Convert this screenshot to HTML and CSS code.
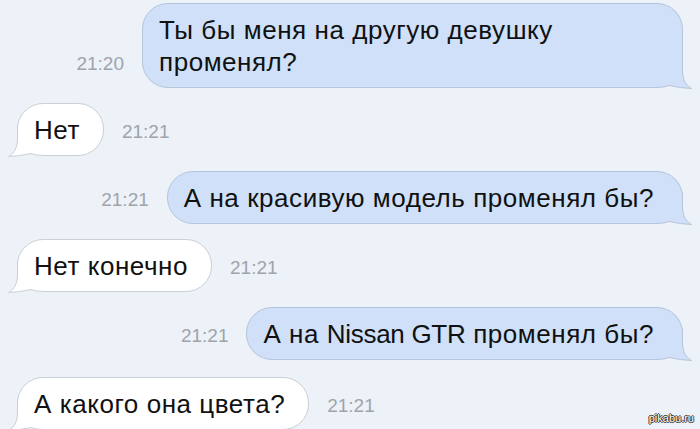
FILE: index.html
```html
<!DOCTYPE html>
<html lang="ru">
<head>
    <meta charset="UTF-8">
    <meta name="viewport" content="width=device-width, initial-scale=1.0">
    <title>Переписка</title>
    <link rel="stylesheet" href="styles.css">
</head>
<body>
    <main class="chat">
        <div class="row out">
            <span class="time">21:20</span>
            <div class="bubble">
                <svg class="tail" width="36" height="32" viewBox="0 0 36 32">
                    <path class="tail-bg" d="M35.5 31.5 Q24 31 13 28.5 Q8 30.5 0 30.5 L0 32 L36 32 Z"/>
                    <path class="tail-fill" d="M26.5 0 L26.5 14 Q26.5 27 35.5 31.5 Q24 31 13 28.5 Q8 30.5 0 30.5 Z"/>
                    <path class="tail-line" d="M26.5 0 L26.5 14 Q26.5 27 35.5 31.5 Q24 31 13 28.5 Q8 30.5 0 30.5"/>
                </svg>
                <span class="text">Ты бы меня на другую девушку променял?</span>
            </div>
        </div>

        <div class="row in">
            <div class="bubble">
                <svg class="tail" width="36" height="32" viewBox="0 0 36 32">
                    <path class="tail-bg" d="M35.5 31.5 Q24 31 13 28.5 Q8 30.5 0 30.5 L0 32 L36 32 Z"/>
                    <path class="tail-fill" d="M26.5 0 L26.5 14 Q26.5 27 35.5 31.5 Q24 31 13 28.5 Q8 30.5 0 30.5 Z"/>
                    <path class="tail-line" d="M26.5 0 L26.5 14 Q26.5 27 35.5 31.5 Q24 31 13 28.5 Q8 30.5 0 30.5"/>
                </svg>
                <span class="text">Нет</span>
            </div>
            <span class="time">21:21</span>
        </div>

        <div class="row out">
            <span class="time">21:21</span>
            <div class="bubble">
                <svg class="tail" width="36" height="32" viewBox="0 0 36 32">
                    <path class="tail-bg" d="M35.5 31.5 Q24 31 13 28.5 Q8 30.5 0 30.5 L0 32 L36 32 Z"/>
                    <path class="tail-fill" d="M26.5 0 L26.5 14 Q26.5 27 35.5 31.5 Q24 31 13 28.5 Q8 30.5 0 30.5 Z"/>
                    <path class="tail-line" d="M26.5 0 L26.5 14 Q26.5 27 35.5 31.5 Q24 31 13 28.5 Q8 30.5 0 30.5"/>
                </svg>
                <span class="text">А на красивую модель променял бы?</span>
            </div>
        </div>

        <div class="row in">
            <div class="bubble">
                <svg class="tail" width="36" height="32" viewBox="0 0 36 32">
                    <path class="tail-bg" d="M35.5 31.5 Q24 31 13 28.5 Q8 30.5 0 30.5 L0 32 L36 32 Z"/>
                    <path class="tail-fill" d="M26.5 0 L26.5 14 Q26.5 27 35.5 31.5 Q24 31 13 28.5 Q8 30.5 0 30.5 Z"/>
                    <path class="tail-line" d="M26.5 0 L26.5 14 Q26.5 27 35.5 31.5 Q24 31 13 28.5 Q8 30.5 0 30.5"/>
                </svg>
                <span class="text">Нет конечно</span>
            </div>
            <span class="time">21:21</span>
        </div>

        <div class="row out">
            <span class="time">21:21</span>
            <div class="bubble">
                <svg class="tail" width="36" height="32" viewBox="0 0 36 32">
                    <path class="tail-bg" d="M35.5 31.5 Q24 31 13 28.5 Q8 30.5 0 30.5 L0 32 L36 32 Z"/>
                    <path class="tail-fill" d="M26.5 0 L26.5 14 Q26.5 27 35.5 31.5 Q24 31 13 28.5 Q8 30.5 0 30.5 Z"/>
                    <path class="tail-line" d="M26.5 0 L26.5 14 Q26.5 27 35.5 31.5 Q24 31 13 28.5 Q8 30.5 0 30.5"/>
                </svg>
                <span class="text">А на <span class="latin">Nissan GTR</span> променял бы?</span>
            </div>
        </div>

        <div class="row in">
            <div class="bubble">
                <svg class="tail" width="36" height="32" viewBox="0 0 36 32">
                    <path class="tail-bg" d="M35.5 31.5 Q24 31 13 28.5 Q8 30.5 0 30.5 L0 32 L36 32 Z"/>
                    <path class="tail-fill" d="M26.5 0 L26.5 14 Q26.5 27 35.5 31.5 Q24 31 13 28.5 Q8 30.5 0 30.5 Z"/>
                    <path class="tail-line" d="M26.5 0 L26.5 14 Q26.5 27 35.5 31.5 Q24 31 13 28.5 Q8 30.5 0 30.5"/>
                </svg>
                <span class="text">А какого она цвета?</span>
            </div>
            <span class="time">21:21</span>
        </div>

        <span class="watermark">pikabu.ru</span>
    </main>
</body>
</html>
```

FILE: styles.css
```css
body {
    margin: 0;
    padding: 0;
    background: #edf1f8;
    font-family: "Liberation Sans", Arial, sans-serif;
    color: #111;
    overflow: hidden;
}

.chat {
    position: relative;
    height: 100vh;
    box-sizing: border-box;
    display: flex;
    flex-direction: column;
    gap: 15px;
    padding: 3px 17px 0;
}

.row {
    display: flex;
    align-items: flex-end;
    gap: 18px;
}

.row.out {
    justify-content: flex-end;
}

.row:last-of-type {
    margin-top: 2px;
}

.time {
    font-size: 19px;
    line-height: 32px;
    padding-bottom: 8px;
    color: #9fa4ab;
}

.bubble {
    position: relative;
    box-sizing: border-box;
    max-width: 541px;
    padding: 10px 28px 9px 16px;
    border: 1px solid;
    border-radius: 26px;
    font-size: 26px;
    line-height: 32px;
    letter-spacing: 0.55px;
}

.bubble .text {
    position: relative;
}

/* latin words run a bit narrower in the original font */
.latin {
    letter-spacing: -0.3px;
}

.out .bubble {
    background: #cfe0f8;
    border-color: #b6c5da;
}

.in .bubble {
    background: #fff;
    border-color: #cbcfd6;
    padding-right: 23px;
}

/* tail in the bottom corner of each bubble */
.tail {
    position: absolute;
    bottom: -2px;
    right: -10px;
}

.in .tail {
    right: auto;
    left: -10px;
    transform: scaleX(-1);
}

.tail-bg {
    fill: #edf1f8;
}

.tail-line {
    fill: none;
    stroke-width: 1;
}

.out .tail-fill {
    fill: #cfe0f8;
}

.out .tail-line {
    stroke: #b6c5da;
}

.in .tail-fill {
    fill: #fff;
}

.in .tail-line {
    stroke: #cbcfd6;
}

.watermark {
    position: absolute;
    right: 6px;
    bottom: 5px;
    font-size: 11px;
    line-height: 12px;
    color: #fff;
    text-shadow: 1px 0 0 #333, -1px 0 0 #333, 0 1px 0 #333, 0 -1px 0 #333;
}
```
